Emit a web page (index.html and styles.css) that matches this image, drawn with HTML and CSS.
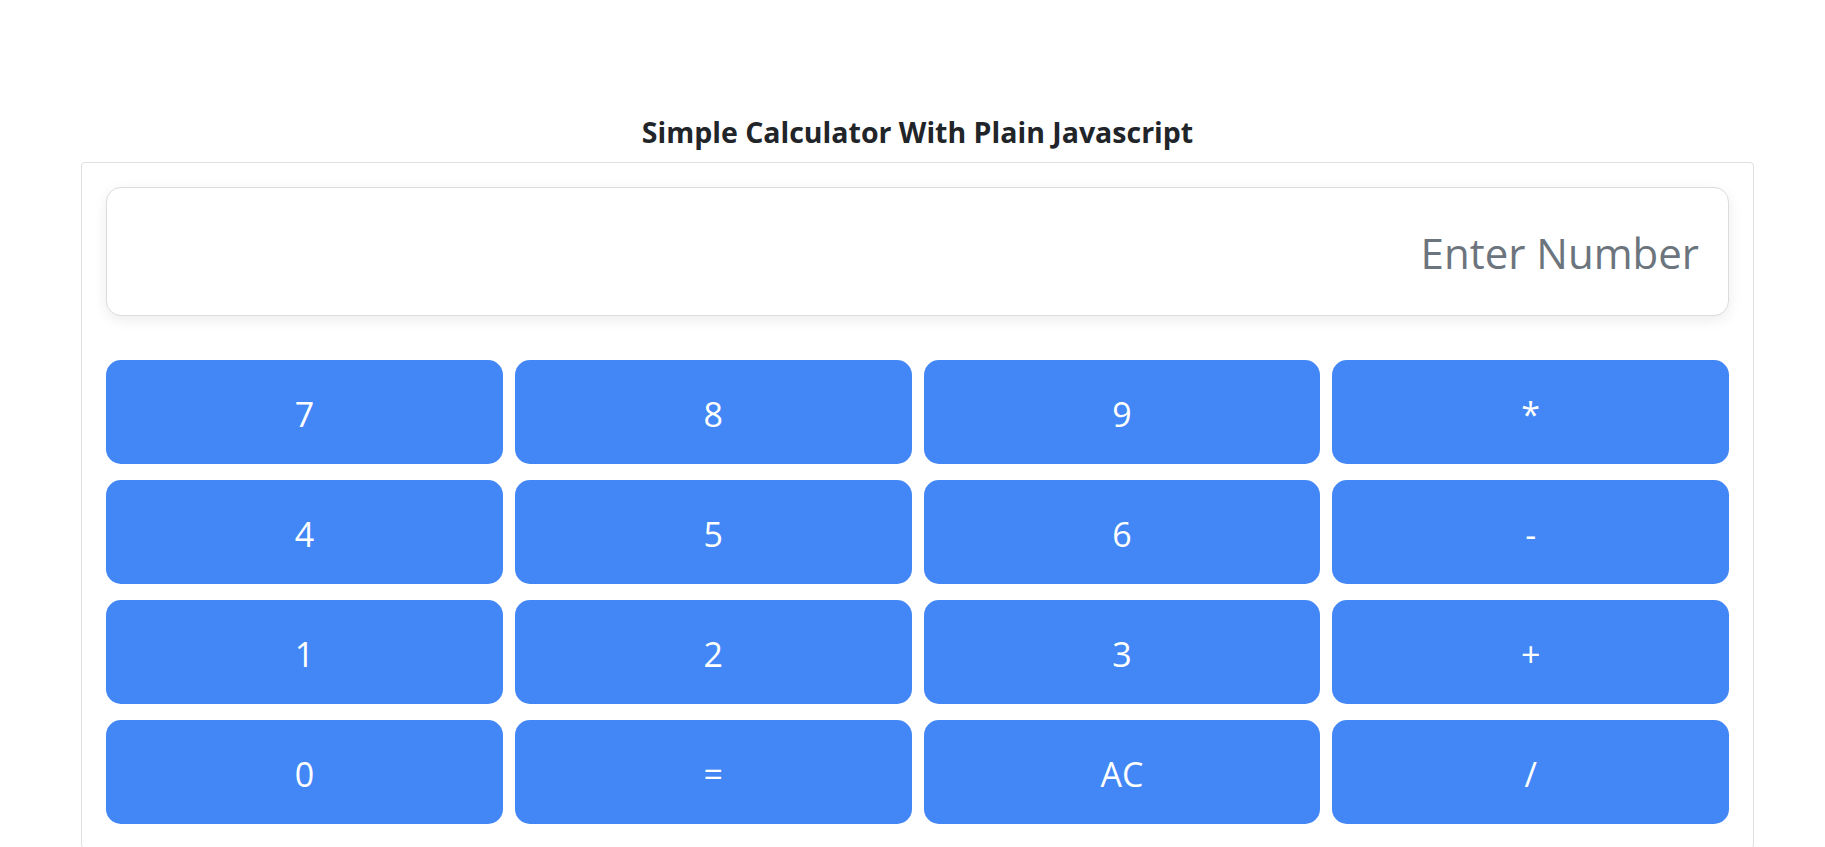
FILE: index.html
```html
<!DOCTYPE html>
<html lang="en">
<head>
<meta charset="utf-8">
<title>Simple Calculator With Plain Javascript</title>
<link rel="stylesheet" href="styles.css">
</head>
<body>
<main class="page">
  <h1 class="title">Simple Calculator With Plain Javascript</h1>
  <section class="card">
    <input class="display" type="text" placeholder="Enter Number">
    <div class="keys">
      <button class="key">7</button>
      <button class="key">8</button>
      <button class="key">9</button>
      <button class="key">*</button>
      <button class="key">4</button>
      <button class="key">5</button>
      <button class="key">6</button>
      <button class="key">-</button>
      <button class="key">1</button>
      <button class="key">2</button>
      <button class="key">3</button>
      <button class="key">+</button>
      <button class="key">0</button>
      <button class="key">=</button>
      <button class="key">AC</button>
      <button class="key">/</button>
    </div>
  </section>
</main>
</body>
</html>
```

FILE: styles.css
```css
* { box-sizing: border-box; }

html, body {
  margin: 0;
  background: #ffffff;
  font-family: "Open Sans", "Noto Sans", "Liberation Sans", sans-serif;
  color: #212529;
}

.page {
  padding: 0 71px 0 81px;
}

.title {
  margin: 115px 0 13px;
  font-size: 28.5px;
  line-height: 34px;
  font-weight: 700;
  text-align: center;
  color: #212529;
}

.card {
  border: 1px solid #dfdfdf;
  border-radius: 4px;
  padding: 24px;
}

.display {
  display: block;
  width: 100%;
  height: 129px;
  margin: 0 0 44px;
  padding: 2px 29px 0;
  border: 1px solid #dcdcdc;
  border-radius: 15px;
  background: #ffffff;
  box-shadow: 0 4px 14px rgba(0, 0, 0, 0.08);
  font-family: inherit;
  font-size: 42px;
  text-align: right;
  color: #212529;
  outline: none;
}

.display::placeholder {
  color: #6c757d;
  opacity: 1;
}

.keys {
  display: grid;
  grid-template-columns: repeat(4, 1fr);
  column-gap: 12px;
  row-gap: 16px;
}

.key {
  height: 104px;
  padding: 3px 0 0;
  border: none;
  border-radius: 15px;
  background: #4287f5;
  color: #ffffff;
  font-family: inherit;
  font-size: 34px;
  font-weight: 400;
  cursor: pointer;
}
```
